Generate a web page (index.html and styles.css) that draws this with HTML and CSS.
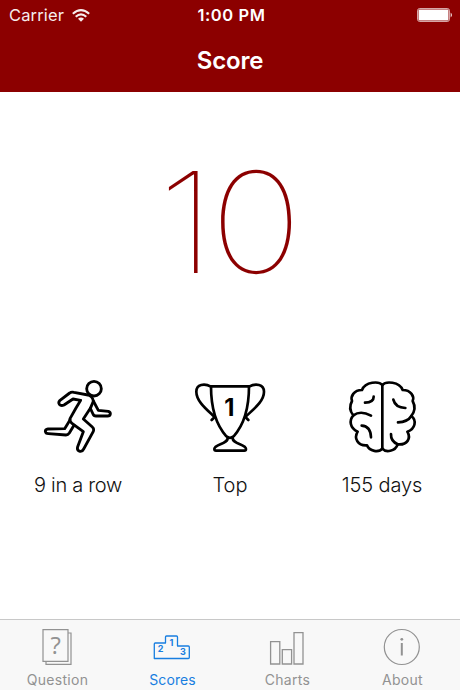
FILE: index.html
```html
<!DOCTYPE html>
<html lang="en">
<head>
<meta charset="utf-8">
<title>Score</title>
<link rel="stylesheet" href="styles.css">
</head>
<body>
<div class="app">
  <header class="header">
    <div class="status">
      <div class="carrier"><span class="carrier-name">Carrier</span>
        <svg class="wifi" viewBox="0 0 18 13" width="18" height="13" fill="none" stroke="#fff" stroke-width="2.1"><path d="M.8 4.7Q9-2.3 17.2 4.7M3.7 7.7Q9 3.2 14.3 7.7"/><path d="M6 9.8Q9 7.2 12 9.8L9 12.8Z" fill="#fff" stroke="none"/></svg>
      </div>
      <span class="time">1:00 PM</span>
      <svg class="battery" viewBox="0 0 36 14" width="36" height="14"><rect x=".5" y=".5" width="32" height="13" rx="2.2" fill="none" stroke="#fff" stroke-opacity=".65"/><rect x="1.5" y="1.5" width="30" height="11" rx="1" fill="#fff"/><path d="M33.7 4.5Q36 7 33.7 9.5Z" fill="#fff"/></svg>
    </div>
    <h1 class="title">Score</h1>
  </header>
  <main class="main">
    <div class="score">10</div>
    <div class="stats">
      <section class="stat">
        <svg class="stat-icon" viewBox="0 0 300 270" fill="none" stroke="#000" stroke-width="8.5" stroke-linejoin="round" stroke-linecap="round">
          <circle cx="192" cy="56" r="22"/>
          <path d="M120 146L138 114L152 91L129 87L102 105Q93 109 88 103Q84 97 90 91L119 69Q124 65 132 67L174 75Q188 79 190 93L205 121L235 124Q242 127 241 132Q240 138 233 138L198 138Q191 138 189 132L181 115L160 147L187 171Q193 176 190 184L161 237Q156 247 147 243Q140 239 143 230L160 185L126 160Q118 154 120 146Z"/>
          <path d="M120 150L104 176L54 177Q46 178 46 184Q47 191 55 191L108 195Q114 195 118 189L132 166M190 94L181 115"/>
        </svg>
        <span class="stat-label label-row">9 in a row</span>
      </section>
      <section class="stat">
        <svg class="stat-icon" viewBox="0 0 300 270" fill="none" stroke="#000" stroke-width="8" stroke-linejoin="round" stroke-linecap="round">
          <path d="M93 49H207C207 111 196 160 161 199Q150 208 139 199C104 160 93 111 93 49Z"/>
          <path d="M93 50C73 39 49 43 49 65C49 94 80 118 104 141L95 150M207 50C227 39 252 43 252 65C252 94 220 118 196 141L205 150"/>
          <path d="M143 203C145 223 103 222 103 237Q103 242 108 242H193Q198 242 198 237C198 222 156 223 158 203"/>
          <text class="cup-number" x="148" y="138">1</text>
        </svg>
        <span class="stat-label label-top">Top</span>
      </section>
      <section class="stat">
        <svg class="stat-icon brain" viewBox="0 0 300 270" fill="none" stroke="#000" stroke-width="8" stroke-linejoin="round" stroke-linecap="round">
          <path d="M142 45V236"/>
          <path d="M142 45C132 33 91 34 81 60C56 60 46 80 51 93C43 108 44 123 55 136C42 151 44 174 68 185C56 205 68 228 96 226C103 245 132 248 142 236"/>
          <path d="M142 45C152 33 193 34 203 60C228 60 239 80 233 93C241 108 240 124 229 138C246 151 241 177 217 185C229 205 217 226 188 223C181 245 152 248 142 236"/>
          <path d="M116 80Q116 97 90 98M55 136Q77 120 108 137M80 167Q107 169 108 202M175 89Q181 113 211 114M229 138Q218 156 189 157M168 192C167 211 177 218 188 223"/>
        </svg>
        <span class="stat-label label-days">155 days</span>
      </section>
    </div>
  </main>
  <nav class="tabs">
    <a class="tab">
      <svg class="tab-icon" viewBox="0 0 40 40" fill="none" stroke="#929292" stroke-width="1.2"><path d="M26 32.3V.6H1V32.3ZM26 4H29V35.3H4V32.3" transform="translate(5 1)"/><text class="question-mark" x="18.7" y="25.5">?</text></svg>
      <span class="tab-label label-question">Question</span>
    </a>
    <a class="tab active">
      <svg class="tab-icon" viewBox="0 0 40 40" fill="none" stroke="#187ee0" stroke-width="1.3" stroke-linejoin="round"><path d="M2.3 30.5V16Q2.3 15 3.3 15H13.5V9Q13.5 8 14.5 8H24.5Q25.5 8 25.5 9V18H36.3Q37.3 18 37.3 19V29.5Q37.3 30.5 36.3 30.5Z"/><g class="podium-text"><text x="8.7" y="24">2</text><text x="19.5" y="17.5">1</text><text x="31" y="27">3</text></g></svg>
      <span class="tab-label label-scores">Scores</span>
    </a>
    <a class="tab">
      <svg class="tab-icon" viewBox="0 0 40 40" fill="none" stroke="#929292" stroke-width="1.3"><path d="M3.6 13.6H12.8V36H3.6ZM15.3 21.6H24.6V36H15.3ZM27 4.6H36V36H27Z"/></svg>
      <span class="tab-label label-charts">Charts</span>
    </a>
    <a class="tab">
      <svg class="tab-icon" viewBox="0 0 40 40" fill="none" stroke="#929292" stroke-width="1.2"><circle cx="19.8" cy="19" r="17.5"/><path d="M19.8 15V27.5" stroke-width="2"/><circle cx="19.8" cy="11.3" r="1.4" fill="#929292" stroke="none"/></svg>
      <span class="tab-label label-about">About</span>
    </a>
  </nav>
</div>
</body>
</html>
```
FILE: styles.css
```css
* { box-sizing: border-box; }
body { margin: 0; font-family: Inter, "Liberation Sans", sans-serif; background: #fff; }
.app { display: flex; flex-direction: column; width: 460px; height: 690px; overflow: hidden; }
.header { height: 92px; background: #8c0000; color: #fff; }
.status { display: grid; grid-template-columns: 1fr auto 1fr; align-items: center; height: 30px; padding: 0 6px 0 9px; }
.carrier { display: flex; align-items: center; gap: 8px; font-size: 16.5px; opacity: .93; }
.carrier-name { letter-spacing: .15px; }
.time { font-size: 16.5px; font-weight: 600; letter-spacing: .6px; }
.battery { justify-self: end; margin-right: 1px; }
.title { margin: 16px 0 0; font-size: 24px; line-height: 30px; font-weight: 600; text-align: center; letter-spacing: -.2px; }
.main { flex: 1; }
.score { margin-top: 59px; height: 142px; line-height: 142px; font-size: 140px; font-weight: 100; letter-spacing: -5px; text-indent: -5px; color: #8c0000; text-align: center; transform: scaleX(1.12); }
.stats { display: grid; grid-template-columns: repeat(3, 152px); justify-content: center; margin-top: 77px; }
.stat { display: flex; flex-direction: column; align-items: center; }
.stat-icon { width: 100px; height: 90px; margin-left: 4px; }
.stat:nth-child(2) .stat-icon { margin-left: 0; }
.stat .brain { margin-left: 6px; }
.stat-label { margin-top: 12px; font-size: 20px; font-weight: 300; line-height: 26px; color: #111; white-space: nowrap; }
.label-row { letter-spacing: -.3px; }
.label-days { letter-spacing: -.1px; }
.cup-number { font: bold 71px Inter, sans-serif; fill: #000; stroke: none; text-anchor: middle; }
.tabs { display: grid; grid-template-columns: repeat(4, 1fr); height: 71px; border-top: 1px solid #c8c8c8; background: #f8f8f8; }
.tab { display: flex; flex-direction: column; align-items: center; padding-top: 8px; color: #929292; }
.active { color: #187ee0; }
.tab-icon { width: 40px; height: 40px; margin-right: 2px; }
.tab-label { margin-top: 3px; font-size: 14px; line-height: 18px; letter-spacing: .3px; }
.label-scores { letter-spacing: .1px; }
.question-mark { font: 400 24px "Open Sans", sans-serif; fill: #929292; stroke: none; text-anchor: middle; }
.podium-text { font: bold 9px Inter, sans-serif; fill: #187ee0; stroke: none; text-anchor: middle; }
```
